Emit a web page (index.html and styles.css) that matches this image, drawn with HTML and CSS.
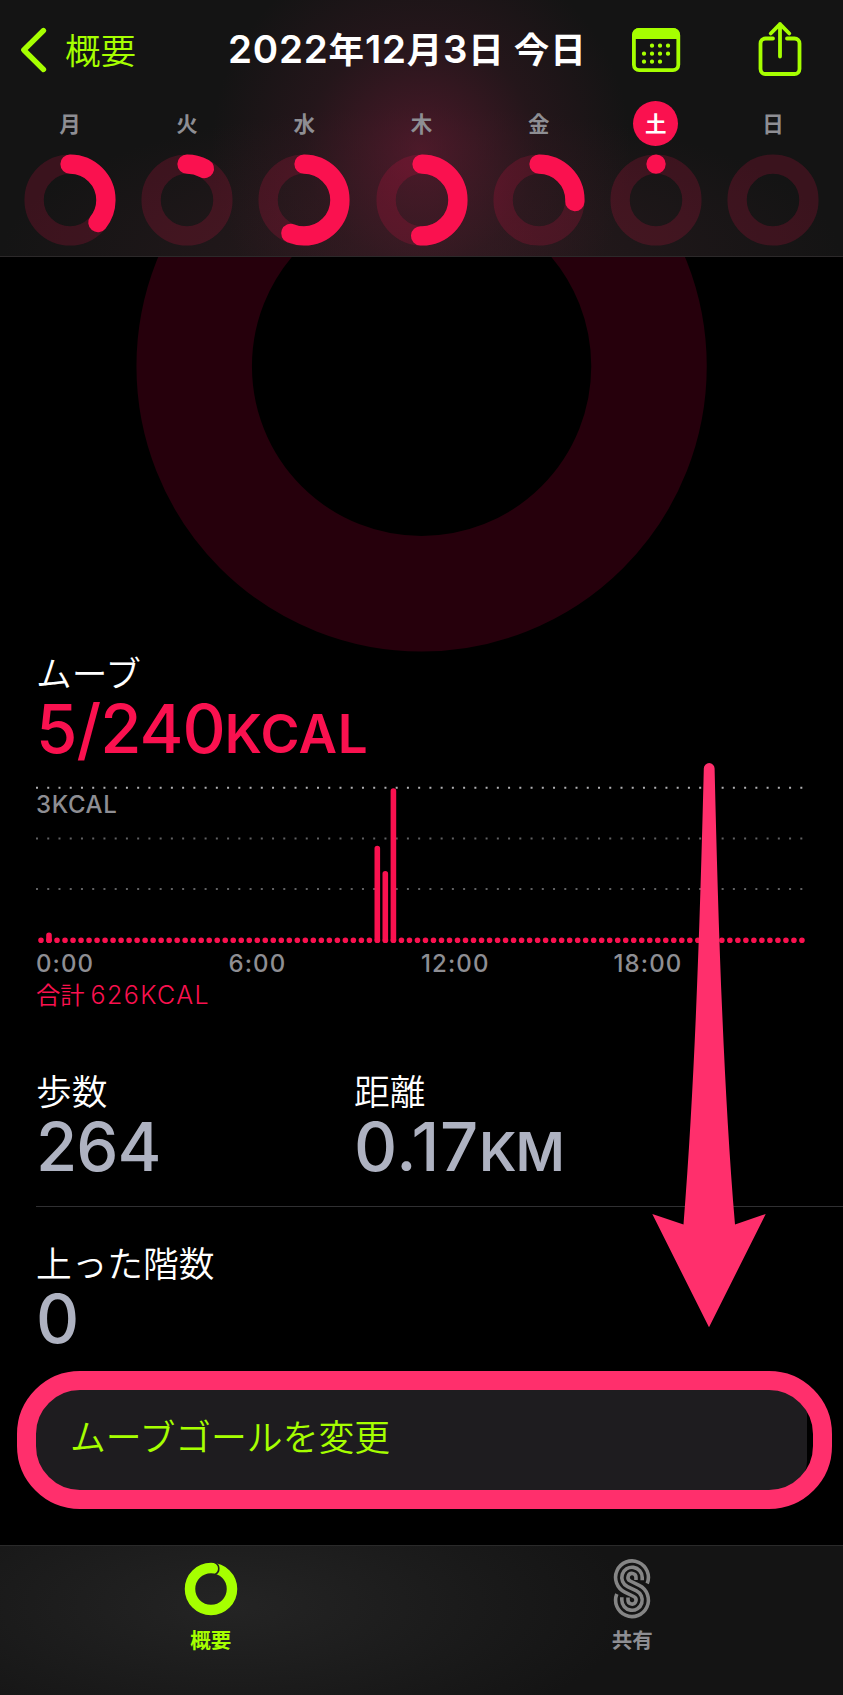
FILE: index.html
```
<!DOCTYPE html>
<html lang="ja">
<head>
  <meta charset="UTF-8">
  <meta name="viewport" content="width=device-width, initial-scale=1.0">
  <link rel="stylesheet" href="styles.css">
  <title>アクティビティ</title>
</head>
<body>
  <header>
    <nav class="top-nav">
      <a class="back">
        <svg width="26" height="46" viewBox="0 0 26 46"><path d="M22.5 3.5 2.8 23l19.7 19.5" /></svg>
        <span>概要</span>
      </a>
      <h1><b>2022</b>年<b>12</b>月<b>3</b>日 今日</h1>
      <svg class="icon-calendar" width="50" height="46" viewBox="0 0 50 46">
        <rect x="2.9" y="2.9" width="44.4" height="40.2" rx="5.3" />
        <path class="fill" d="M1 12V8a7 7 0 0 1 7-7h34a7 7 0 0 1 7 7v4z" />
        <path class="dots" d="M21 18.7h.01M29 18.7h.01M37 18.7h.01M13 26.7h.01M21 26.7h.01M29 26.7h.01M37 26.7h.01M13 34.7h.01M21 34.7h.01M29 34.7h.01" />
      </svg>
      <svg class="icon-share" width="44" height="56" viewBox="0 0 44 56">
        <path d="M15 17.5H7.5a5 5 0 0 0-5 5V48a5 5 0 0 0 5 5h29a5 5 0 0 0 5-5V22.5a5 5 0 0 0-5-5H29" />
        <path d="M22 35.5V3M12.7 12.5 22 3.2l9.3 9.3" />
      </svg>
    </nav>
    <ul class="week">
      <li><span>月</span><svg viewBox="0 0 92 92"><circle class="track" cx="46" cy="46" r="35.9" /><circle class="value" cx="46" cy="46" r="35.9" pathLength="360" stroke-dasharray="129 400" /></svg></li>
      <li><span>火</span><svg viewBox="0 0 92 92"><circle class="track" cx="46" cy="46" r="35.9" /><circle class="value" cx="46" cy="46" r="35.9" pathLength="360" stroke-dasharray="29 400" /></svg></li>
      <li><span>水</span><svg viewBox="0 0 92 92"><circle class="track" cx="46" cy="46" r="35.9" /><circle class="value" cx="46" cy="46" r="35.9" pathLength="360" stroke-dasharray="201.6 400" /></svg></li>
      <li><span>木</span><svg viewBox="0 0 92 92"><circle class="track" cx="46" cy="46" r="35.9" /><circle class="value" cx="46" cy="46" r="35.9" pathLength="360" stroke-dasharray="182.3 400" /></svg></li>
      <li><span>金</span><svg viewBox="0 0 92 92"><circle class="track" cx="46" cy="46" r="35.9" /><circle class="value" cx="46" cy="46" r="35.9" pathLength="360" stroke-dasharray="92.6 400" /></svg></li>
      <li class="today"><span>土</span><svg viewBox="0 0 92 92"><circle class="track" cx="46" cy="46" r="35.9" /><circle class="value" cx="46" cy="46" r="35.9" pathLength="360" stroke-dasharray="0.1 400" /></svg></li>
      <li><span>日</span><svg viewBox="0 0 92 92"><circle class="track" cx="46" cy="46" r="35.9" /></svg></li>
    </ul>
  </header>

  <main>
    <svg class="big-ring" width="572" height="395" viewBox="0 0 572 395"><circle cx="285.6" cy="109.3" r="227.4" /></svg>

    <section class="move">
      <h2>ムーブ</h2>
      <p class="value-text">5/240<small>KCAL</small></p>
      <div class="chart">
        <svg width="770" height="164" viewBox="0 0 770 164">
          <path class="grid strong" d="M0 5.700H767" />
          <path class="grid" d="M0 56.500H767M0 107H767" />
          <path class="base" d="M5 158.300H767" />
          <path class="bars" d="M13 153.200v5M341.300 66.600v91.600M349.300 91.800v66.400M357.400 9v149.200" />
        </svg>
        <span class="chart-max">3KCAL</span>
      </div>
      <div class="hours">
        <span>0:00</span><span>6:00</span><span>12:00</span><span>18:00</span>
      </div>
      <p class="total">合計<span>626KCAL</span></p>
    </section>

    <section class="stats">
      <div>
        <h2>歩数</h2>
        <p class="value-text">264</p>
      </div>
      <div>
        <h2>距離</h2>
        <p class="value-text distance">0.17<small>KM</small></p>
      </div>
    </section>
    <section class="stats floors">
      <div>
        <h2>上った階数</h2>
        <p class="value-text">0</p>
      </div>
    </section>

    <a class="goal">ムーブゴールを変更</a>
  </main>

  <footer>
    <a class="active">
      <svg width="60" height="62" viewBox="0 0 60 62">
        <circle cx="30" cy="31" r="21" />
        <path class="notch" d="M33.500 4.500a6.500 6.500 0 0 1 .5 12" />
      </svg>
      <span>概要</span>
    </a>
    <a>
      <svg width="60" height="62" viewBox="0 0 60 62">
        <path d="M45.200 25.500A16.400 16.400 0 1 0 22.800 34.100L31.750 38.500A4 4 0 1 1 26 42.100V39.500" />
        <path d="M40.200 22.300V19.400A10.200 10.200 0 1 0 25.500 28.600L34.500 32.900A10.200 10.200 0 1 1 19.800 42.100V39.200" />
        <path d="M34 22V19.400A4 4 0 1 0 28.250 23L37.200 27.400A16.400 16.400 0 1 1 14.800 36" />
      </svg>
      <span>共有</span>
    </a>
  </footer>

  <!-- callouts -->
  <svg class="arrow" width="116" height="568" viewBox="0 0 116 568">
    <path d="M51.800 6.500a5.400 5.400 0 0 1 10.800 0C66 150 71 320 83 462.500L113.700 452 57 565.300.3 452l31.200 10.500C43 320 48.300 150 51.800 6.500z" />
  </svg>
  <div class="highlight"></div>
</body>
</html>
```
FILE: styles.css
```
:root {
  --green: #a6ff00;
  --red: #fa114f;
  --pink: #ff2f6c;
  --grey: #8e8e93;
  --silver: #aeb2c1;
}

* {
  margin: 0;
  padding: 0;
  box-sizing: border-box;
}

body {
  position: relative;
  display: flex;
  flex-direction: column;
  width: 843px;
  height: 1695px;
  overflow: hidden;
  background-color: #000;
  color: #fff;
  font-family: Inter, "Noto Sans CJK JP", sans-serif;
}

svg {
  display: block;
  fill: none;
}

header {
  height: 257px;
  border-bottom: 1px solid #2c292a;
  background:
    radial-gradient(circle 210px at 421px 150px, rgba(110, 28, 54, 0.6), rgba(70, 26, 40, 0.32) 55%, rgba(60, 26, 36, 0)),
    radial-gradient(ellipse 420px 150px at 421px 257px, #2a1a1e, #141414);
}

.top-nav {
  display: flex;
  align-items: center;
  height: 100px;
  padding-left: 21px;
}

.back {
  display: flex;
  align-items: center;
  gap: 18px;
  width: 207px;
  color: var(--green);
  font-size: 35.5px;
  font-weight: 350;
}

.back span {
  margin-top: -4px;
}

.back svg {
  stroke: var(--green);
  stroke-width: 5.3;
  stroke-linecap: round;
  stroke-linejoin: round;
}

h1 {
  width: 403px;
  margin-top: -5px;
  font-size: 35.5px;
  font-weight: 700;
  letter-spacing: 0.8px;
  white-space: nowrap;
}

h1 b {
  font-size: 38.5px;
  font-weight: 600;
}

.icon-calendar {
  stroke: var(--green);
  stroke-width: 3.8;
}

.icon-calendar .fill {
  fill: var(--green);
  stroke: none;
}

.icon-calendar .dots {
  stroke-width: 4.3;
  stroke-linecap: round;
}

.icon-share {
  margin: -3px 0 0 77px;
  stroke: var(--green);
  stroke-width: 3.8;
  stroke-linecap: round;
  stroke-linejoin: round;
}

.week {
  display: grid;
  grid-template-columns: repeat(7, 117.2px);
  justify-content: center;
  list-style: none;
}

.week li {
  display: flex;
  flex-direction: column;
  align-items: center;
  gap: 8px;
}

.week span {
  display: grid;
  place-items: center;
  width: 45px;
  height: 45px;
  margin-top: 1px;
  padding-bottom: 2px;
  border-radius: 50%;
  color: var(--grey);
  font-size: 21.5px;
  font-weight: 700;
}

.week .today span {
  background-color: var(--red);
  color: #fff;
}

.week svg {
  width: 92px;
  height: 92px;
  stroke-width: 19.3;
}

.track {
  stroke: rgba(250, 17, 79, 0.17);
}

.value {
  stroke: var(--red);
  stroke-linecap: round;
  transform: rotate(-90deg);
  transform-origin: center;
}

main {
  height: 1288px;
}

.big-ring {
  margin: 0 auto;
  stroke: #26000c;
  stroke-width: 115.5;
}

.move {
  height: 413px;
  padding: 2px 36px 0;
}

h2 {
  height: 41px;
  font-size: 35.7px;
  font-weight: 350;
  line-height: 41px;
}

.value-text {
  height: 68px;
  color: var(--silver);
  font-size: 67px;
  font-weight: 480;
  letter-spacing: -1px;
  line-height: 68px;
}

.value-text small {
  font-size: 53px;
  font-weight: 560;
  letter-spacing: 0.5px;
}

.distance {
  letter-spacing: 0.8px;
}

.distance small {
  letter-spacing: -0.8px;
}

.move .value-text {
  color: var(--red);
}

.chart {
  position: relative;
  margin-top: 19px;
}

.grid {
  stroke: #606062;
  stroke-width: 2;
  stroke-dasharray: 2 9.24;
}

.strong {
  stroke: #b0b0b2;
}

.base {
  stroke: var(--red);
  stroke-width: 5.6;
  stroke-linecap: round;
  stroke-dasharray: 0 8.01;
}

.bars {
  stroke: var(--red);
  stroke-width: 5.6;
  stroke-linecap: round;
}

.chart-max {
  position: absolute;
  top: 8px;
  left: 0;
  color: var(--grey);
  font-size: 24px;
  font-weight: 500;
  letter-spacing: 0.6px;
}

.hours {
  display: grid;
  grid-template-columns: repeat(4, 192.5px);
  color: var(--grey);
  font-size: 24px;
  font-weight: 500;
  letter-spacing: 1.1px;
  line-height: 36px;
}

.total {
  display: flex;
  gap: 6px;
  color: var(--red);
  font-size: 24.3px;
  font-weight: 350;
  line-height: 27px;
}

.total span {
  font-size: 25px;
  letter-spacing: 1.4px;
}

.stats {
  display: grid;
  grid-template-columns: 318px 1fr;
  height: 142px;
  margin-left: 36px;
  padding-top: 7px;
  border-bottom: 1px solid #303032;
}

.floors {
  height: 176px;
  padding-top: 37px;
  border: none;
}

.goal {
  display: flex;
  align-items: center;
  width: 771px;
  height: 108px;
  margin-left: 36px;
  padding: 0 0 4px 34px;
  border-radius: 30px;
  background-color: #1e1c1f;
  color: var(--green);
  font-size: 35.8px;
  font-weight: 350;
}

footer {
  display: grid;
  grid-template-columns: 1fr 1fr;
  height: 150px;
  border-top: 1px solid #2a2a2a;
  background: radial-gradient(ellipse 400px 150px at 230px 60px, #242424, #141414);
}

footer a {
  display: flex;
  flex-direction: column;
  align-items: center;
  padding-top: 12px;
  color: var(--grey);
  font-size: 20.5px;
  font-weight: 700;
  stroke: #858585;
  stroke-width: 3.6;
}

footer span {
  stroke: none;
  line-height: 41px;
}

footer .active {
  color: var(--green);
  stroke: var(--green);
  stroke-width: 10.5;
}

footer .notch {
  stroke: #202020;
  stroke-width: 1.6;
}

.arrow {
  position: absolute;
  top: 762px;
  left: 652px;
  fill: var(--pink);
}

.highlight {
  position: absolute;
  top: 1371px;
  left: 17px;
  width: 815px;
  height: 138px;
  border: 19px solid var(--pink);
  border-radius: 63px;
}
```
